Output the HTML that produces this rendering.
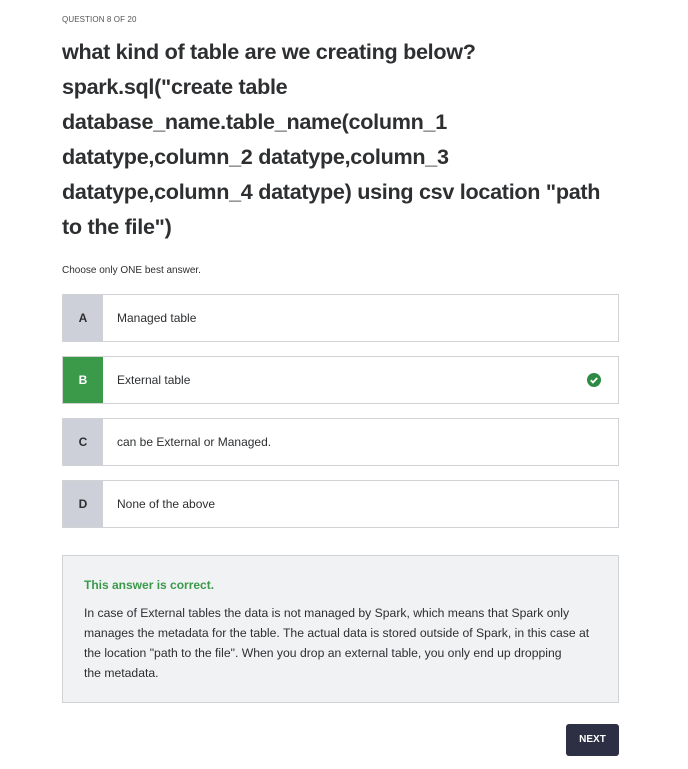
<!DOCTYPE html>
<html><head><style>
body{margin:0;background:#fff;font-family:"Liberation Sans",sans-serif;color:#1c1d1f;width:688px;height:769px;position:relative;overflow:hidden}
.abs{position:absolute}
.q{left:62px;top:34px;font-weight:bold;font-size:21.6px;line-height:35px;letter-spacing:-0.3px;white-space:nowrap;color:#2d2f31}
.opt{position:absolute;left:62px;width:555px;height:46px;border:1px solid #d1d2d6;background:#fff}
.let{position:absolute;left:0;top:0;width:40px;height:46px;background:#cdd0d8;font-size:12px;font-weight:bold;text-align:center;line-height:46px;color:#2d2f31}
.txt{position:absolute;left:54px;top:0;line-height:46px;font-size:12px;color:#2d2f31}
</style></head><body>
<div class="abs" style="left:62px;top:15px;font-size:8px;color:#555;letter-spacing:0.1px">QUESTION 8 OF 20</div>
<div class="abs q">what kind of table are we creating below?<br>spark.sql("create table<br>database_name.table_name(column_1<br>datatype,column_2 datatype,column_3<br>datatype,column_4 datatype) using csv location "path<br>to the file")</div>
<div class="abs" style="left:62px;top:265px;font-size:10px;color:#2d2f31">Choose only ONE best answer.</div>
<div class="opt" style="top:294px"><div class="let">A</div><div class="txt">Managed table</div></div>
<div class="opt" style="top:356px"><div class="let" style="background:#3a9a4a;color:#fff">B</div><div class="txt">External table</div>
<svg class="abs" style="left:524px;top:16px" width="14" height="14" viewBox="0 0 14 14"><circle cx="7" cy="7" r="7" fill="#2e8b45"/><path d="M3.8 7.2l2.2 2.2 4.2-4.4" stroke="#fff" stroke-width="1.8" fill="none"/></svg></div>
<div class="opt" style="top:418px"><div class="let">C</div><div class="txt">can be External or Managed.</div></div>
<div class="opt" style="top:480px"><div class="let">D</div><div class="txt">None of the above</div></div>
<div class="abs" style="left:62px;top:555px;width:555px;height:146px;background:#f1f2f4;border:1px solid #d1d2d6">
<div class="abs" style="left:21px;top:22px;font-size:12px;font-weight:bold;color:#3a9a4a">This answer is correct.</div>
<div class="abs" style="left:21px;top:47px;width:530px;font-size:12.2px;line-height:20px;color:#2d2f31;white-space:nowrap">In case of External tables the data is not managed by Spark, which means that Spark only<br>manages the metadata for the table. The actual data is stored outside of Spark, in this case at<br>the location "path to the file". When you drop an external table, you only end up dropping<br>the metadata.</div>
</div>
<div class="abs" style="left:566px;top:724px;width:53px;height:32px;background:#2d2f44;border-radius:3px;color:#fff;font-size:10px;font-weight:bold;text-align:center;line-height:32px">NEXT</div>
</body></html>
